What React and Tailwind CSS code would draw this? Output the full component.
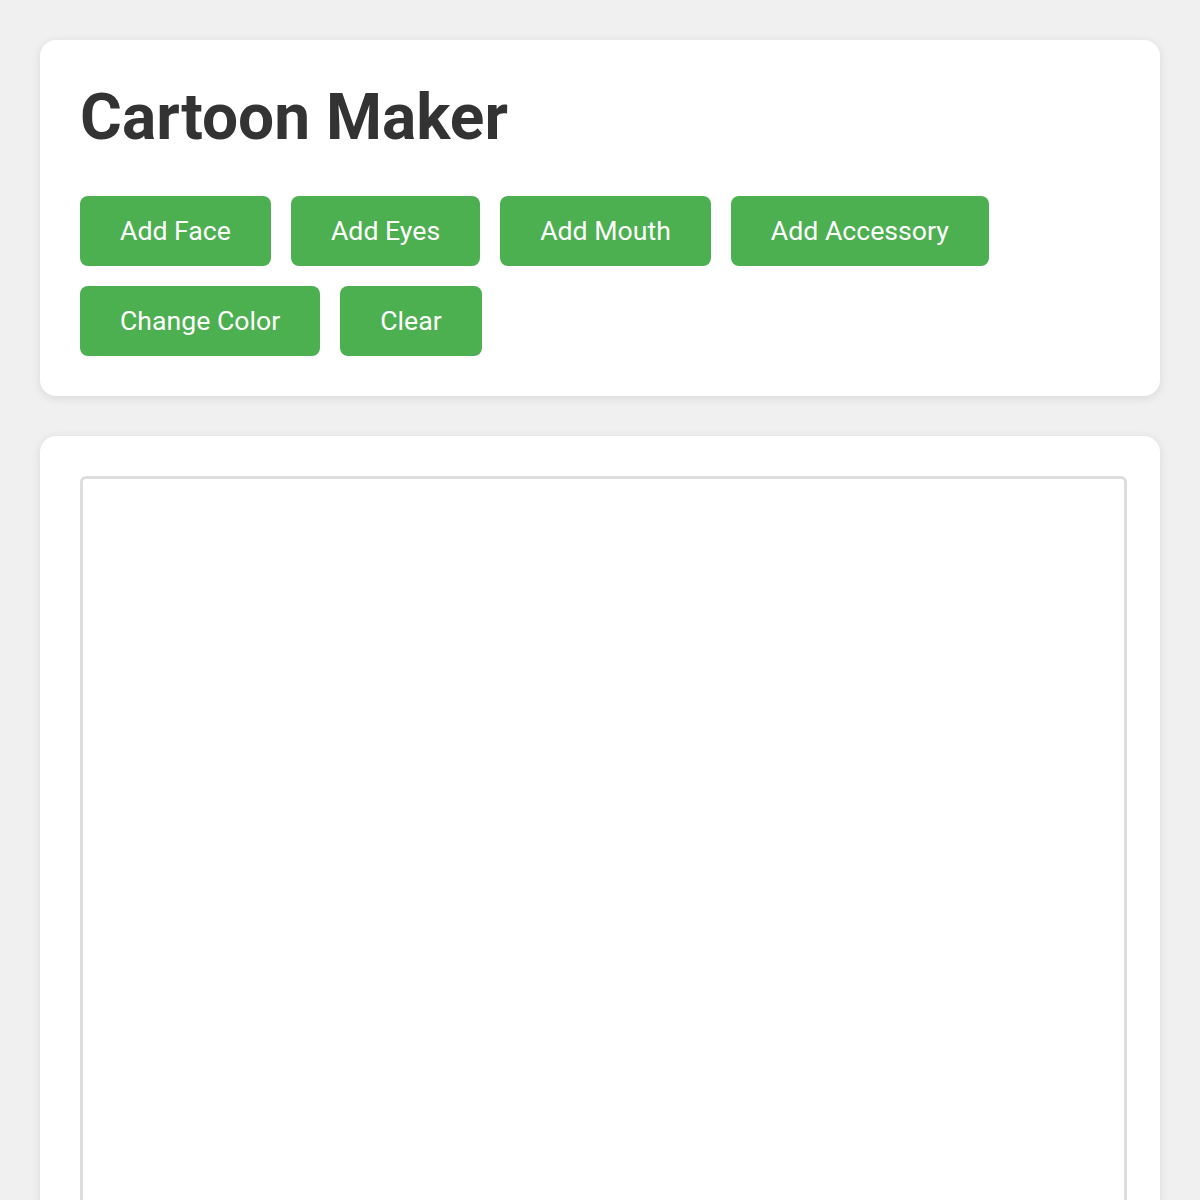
import React from "react";

const buttons = ["Add Face", "Add Eyes", "Add Mouth", "Add Accessory", "Change Color", "Clear"];

export default function App() {
  return (
    <div className="min-h-[1200px] bg-[#f0f0f0] p-[40px] font-['Roboto',sans-serif]">
      <div className="flex flex-col gap-[40px]">
        <div className="rounded-[16px] bg-white p-[40px] shadow-[0_2px_10px_rgba(0,0,0,0.1)]">
          <h1 className="m-0 text-[64px] font-bold leading-[76px] text-[#333]">Cartoon Maker</h1>
          <div className="mt-[40px] flex flex-wrap gap-[20px] w-[940px]">
            {buttons.map((b) => (
              <button
                key={b}
                className="h-[70px] rounded-[8px] bg-[#4caf50] px-[40px] text-[26.67px] text-white"
              >
                {b}
              </button>
            ))}
          </div>
        </div>
        <div className="rounded-[16px] bg-white p-[40px] shadow-[0_2px_10px_rgba(0,0,0,0.1)]">
          <div className="h-[800px] w-[1047px] rounded-[6px] border-[3px] border-[#ddd] bg-white"></div>
        </div>
      </div>
    </div>
  );
}
